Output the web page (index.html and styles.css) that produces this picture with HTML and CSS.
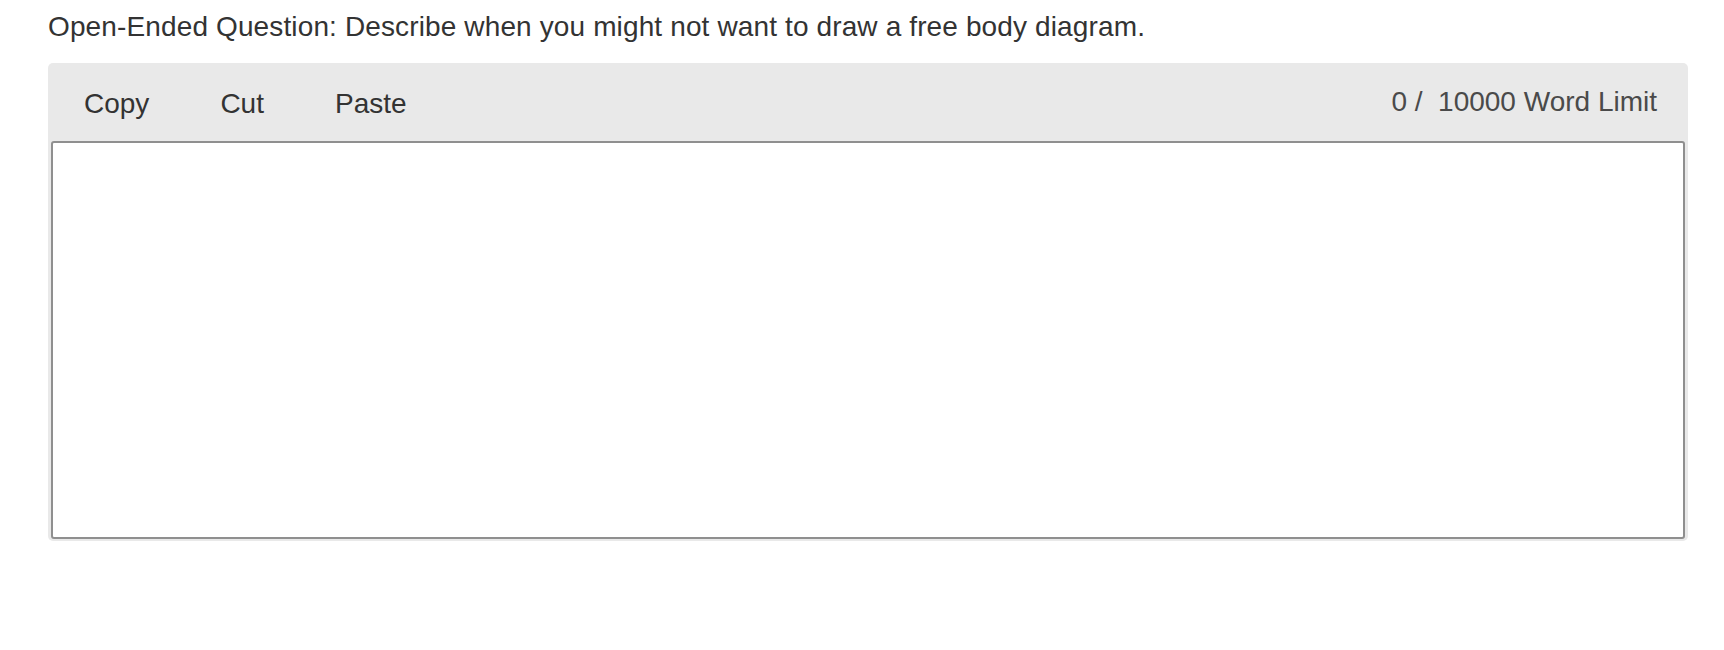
FILE: index.html
```html
<!DOCTYPE html>
<html>
<head>
<meta charset="utf-8">
<link rel="stylesheet" href="styles.css">
</head>
<body>
<div class="page">
  <p class="question">Open-Ended Question: Describe when you might not want to draw a free body diagram.</p>
  <div class="editor">
    <div class="toolbar">
      <div class="actions">
        <span class="btn">Copy</span>
        <span class="btn">Cut</span>
        <span class="btn">Paste</span>
      </div>
      <div class="count">0 / &nbsp;10000 Word Limit</div>
    </div>
    <textarea class="answer"></textarea>
  </div>
</div>
</body>
</html>
```
FILE: styles.css
```css
html, body {
  margin: 0;
  padding: 0;
  background: #ffffff;
}
.page {
  padding: 0 36px 0 48px;
  font-family: "Liberation Sans", Arial, Helvetica, sans-serif;
  color: #333333;
}
.question {
  margin: 0;
  padding-top: 11px;
  font-size: 28px;
  line-height: 32px;
  letter-spacing: 0.13px;
  color: #333333;
}
.editor {
  margin-top: 20px;
  background: #e9e9e9;
  border-radius: 5px;
  padding: 0 3px 2px 3px;
}
.toolbar {
  display: flex;
  justify-content: space-between;
  align-items: center;
  height: 78px;
  font-size: 28px;
  line-height: 32px;
}
.actions {
  display: flex;
  align-items: center;
  gap: 71px;
  padding-left: 33px;
  padding-top: 3px;
}
.btn {
  color: #333333;
}
.count {
  color: #4a4a4a;
  padding-right: 28px;
}
.answer {
  display: block;
  box-sizing: border-box;
  width: 100%;
  height: 398px;
  margin: 0;
  border: 2px solid #8f8f8f;
  border-radius: 3px;
  background: #ffffff;
  resize: none;
  outline: none;
}
```
